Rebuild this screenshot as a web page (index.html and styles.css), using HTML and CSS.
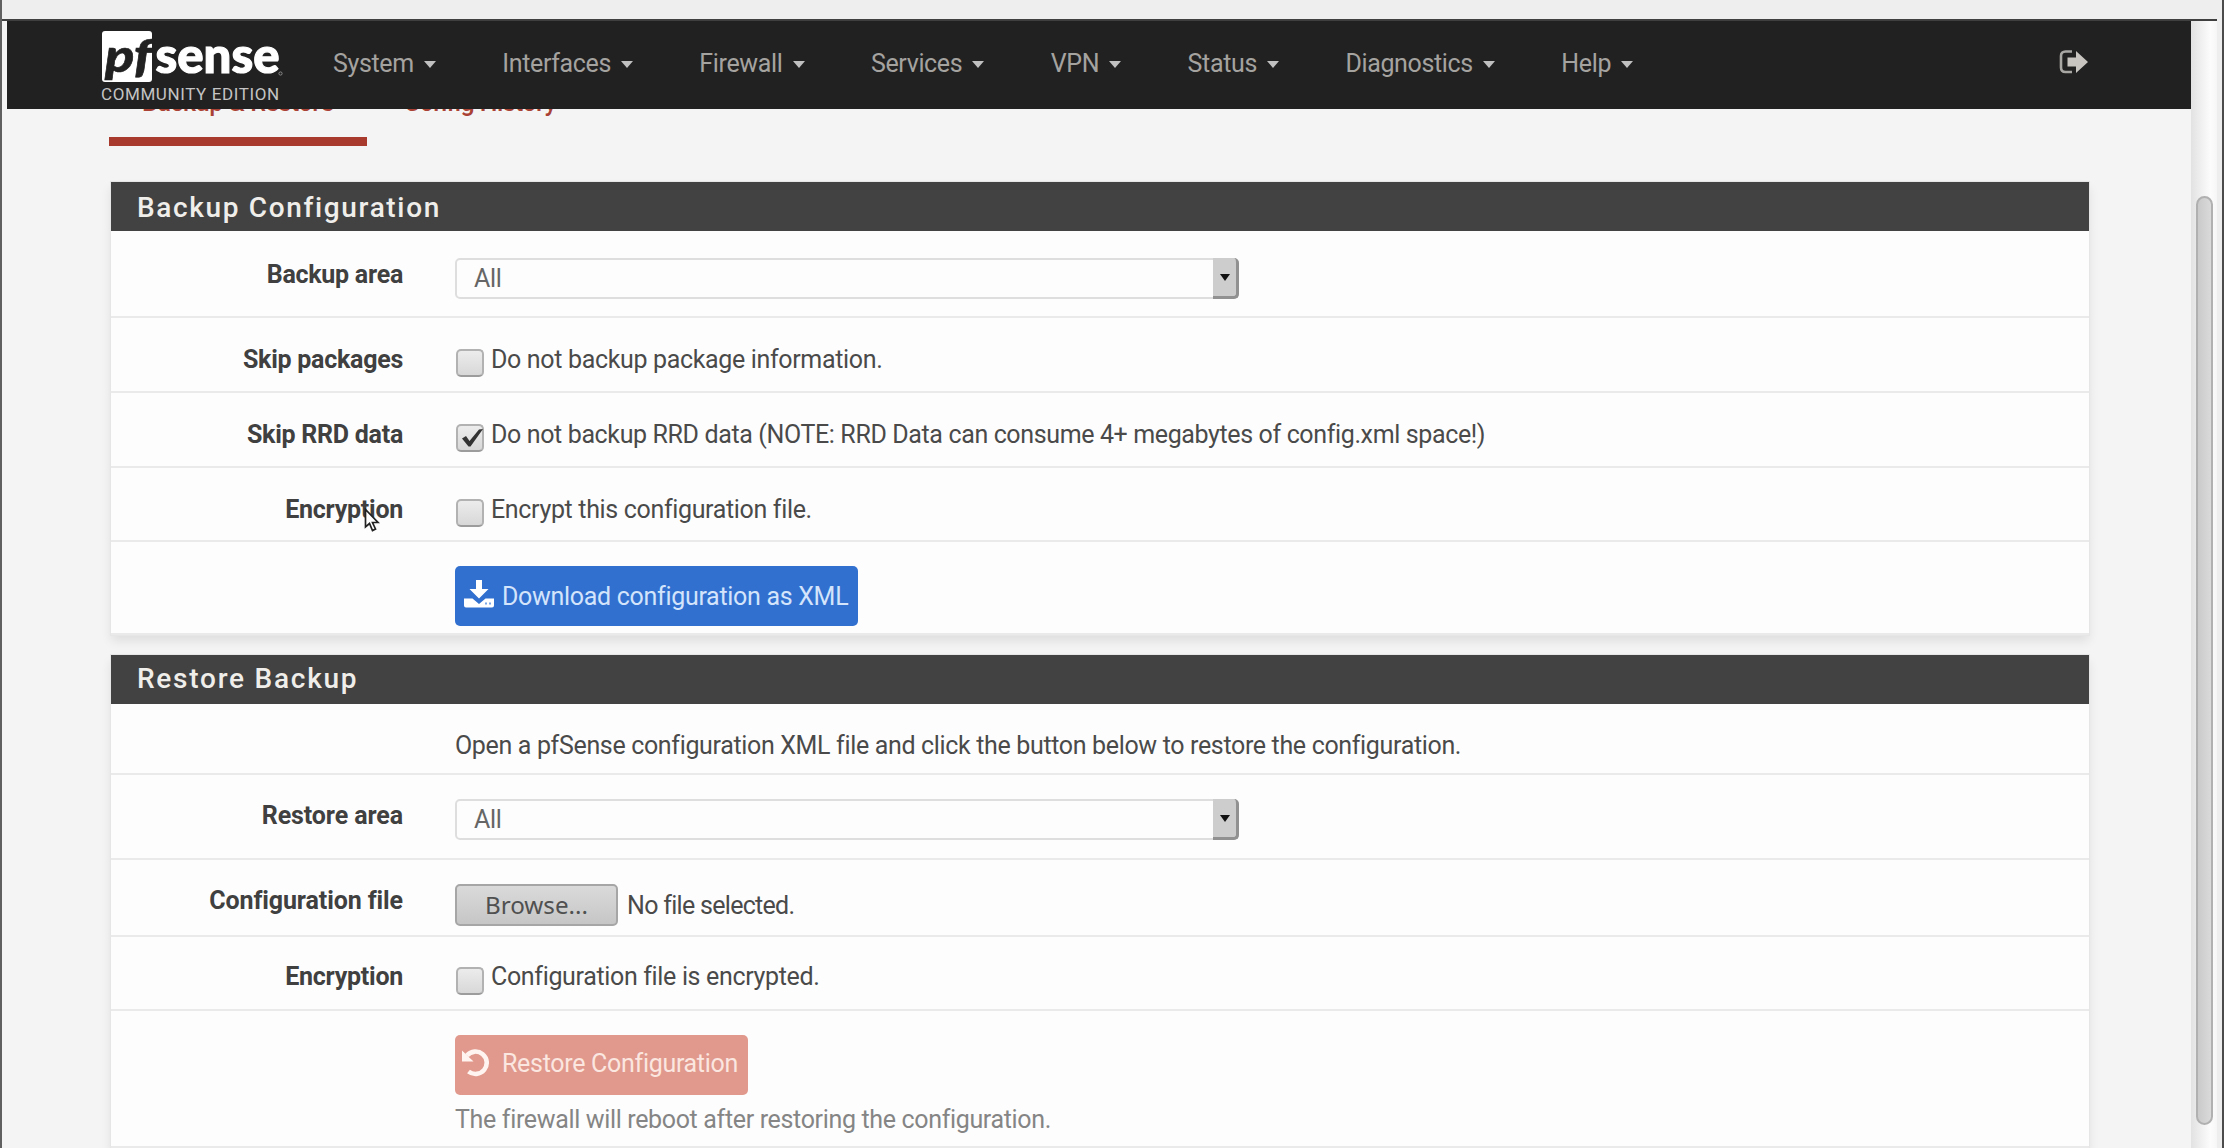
FILE: index.html
```html
<!DOCTYPE html>
<html lang="en">
<head>
<meta charset="utf-8">
<title>Diagnostics: Backup &amp; Restore</title>
<link rel="stylesheet" href="styles.css">
</head>
<body>
<div class="window">
  <div class="viewport">
    <div class="page">
      <nav class="navbar">
        <a class="brand">
          <svg class="logo" width="184" height="54" viewBox="0 0 184 54">
            <rect x="2" y="1" width="50" height="51" rx="3" fill="#fff"/>
            <text class="logo-pf" x="5" y="42" textLength="47" lengthAdjust="spacingAndGlyphs">pf</text>
            <text class="logo-sense" x="55.500" y="42.500" textLength="124" lengthAdjust="spacingAndGlyphs">sense</text>
            <circle cx="180.500" cy="43.500" r="1.600" fill="none" stroke="#8a8a8a"/>
          </svg>
          <span class="edition">COMMUNITY EDITION</span>
        </a>
        <ul class="menu">
          <li>System<i class="caret"></i></li>
          <li>Interfaces<i class="caret"></i></li>
          <li>Firewall<i class="caret"></i></li>
          <li>Services<i class="caret"></i></li>
          <li>VPN<i class="caret"></i></li>
          <li>Status<i class="caret"></i></li>
          <li>Diagnostics<i class="caret"></i></li>
          <li>Help<i class="caret"></i></li>
        </ul>
        <svg class="logout" width="30" height="24" viewBox="0 0 30 24">
          <path d="M13 1.500H6.500Q2 1.500 2 6V17.500Q2 22 6.500 22H13" fill="none" stroke="#a9a7a4" stroke-width="2.600"/>
          <path d="M8.500 7.500H17V1L29 12 17 23V16.500H8.500Z" fill="#c8c5c0"/>
        </svg>
      </nav>

      <div class="tabs">
        <a class="tab active">Backup &amp; Restore</a>
        <a class="tab">Config History</a>
      </div>

      <section class="panel backup">
        <h2>Backup Configuration</h2>
        <div class="row area">
          <label>Backup area</label>
          <div class="select"><span>All</span><b class="arrow"></b></div>
        </div>
        <div class="row">
          <label>Skip packages</label>
          <div class="check"><i class="box"></i>Do not backup package information.</div>
        </div>
        <div class="row">
          <label>Skip RRD data</label>
          <div class="check note"><i class="box"><svg width="28" height="28" viewBox="0 0 28 28"><path d="M6 14.500L10 12 13.500 17 23 5.500 27 5 14.500 22.500H12.500Z" fill="#333"/></svg></i>Do not backup RRD data (NOTE: RRD Data can consume 4+ megabytes of config.xml space!)</div>
        </div>
        <div class="row encrypt">
          <label>Encryption</label>
          <div class="check"><i class="box"></i>Encrypt this configuration file.</div>
        </div>
        <div class="row action">
          <label></label>
          <div><button class="btn primary">
            <svg width="30" height="28" viewBox="0 0 30 28"><path d="M12 0H18V9H24.500L15 18.500 5.500 9H12Z" fill="#fff"/><path d="M0 18.500H8.500L15 24 21.500 18.500H30V25.500Q30 27.500 28 27.500H2Q0 27.500 0 25.500Z" fill="#fff"/><path d="M21 23.500h2M25 23.500h2" stroke="#7aa5e6" stroke-width="2"/></svg>
            <span>Download configuration as XML</span></button></div>
        </div>
      </section>

      <section class="panel restore">
        <h2>Restore Backup</h2>
        <div class="row intro">
          <label></label>
          <div class="text">Open a pfSense configuration XML file and click the button below to restore the configuration.</div>
        </div>
        <div class="row area">
          <label>Restore area</label>
          <div class="select"><span>All</span><b class="arrow"></b></div>
        </div>
        <div class="row file">
          <label>Configuration file</label>
          <div class="upload"><button class="browse">Browse...</button><span>No file selected.</span></div>
        </div>
        <div class="row encrypt">
          <label>Encryption</label>
          <div class="check"><i class="box"></i>Configuration file is encrypted.</div>
        </div>
        <div class="row action">
          <label></label>
          <div><button class="btn danger">
            <svg width="30" height="29" viewBox="0 0 30 29"><path d="M5 6.500A11.200 11.200 0 1 1 6.500 22.500" fill="none" stroke="#fff4f0" stroke-width="4.600"/><path d="M0 1.500L0 12.500H11.500Z" fill="#fff4f0"/></svg>
            <span>Restore Configuration</span></button>
            <p class="help">The firewall will reboot after restoring the configuration.</p></div>
        </div>
      </section>
    </div>
    <div class="scrollbar"><div class="thumb"></div></div>
  </div>
  <svg class="cursor" width="16" height="25" viewBox="0 0 16 25"><path d="M1.500 1.500V19L5.500 15.500 8.500 22.500 11.500 21 8.500 14.500H14Z" fill="#fff" stroke="#222" stroke-width="1.700"/></svg>
</div>
</body>
</html>
```
FILE: styles.css
```css
* { box-sizing: border-box; }
body {
  margin: 0;
  background: #eeeeee;
  color: #4a4a4a;
  font: 25px/30px Roboto, "Liberation Sans", sans-serif;
  letter-spacing: -0.34px;
}
.window {
  position: relative;
  height: 1148px;
  padding-top: 19px;
  border-left: 2px solid #606060;
  border-right: 2px solid #4c4c4c;
  overflow: hidden;
}
.viewport {
  display: flex;
  width: 2215px;
  height: 1129px;
  border-top: 2px solid #3f3f3f;
}
.page {
  width: 2189px;
  padding-left: 5px;
  background: #f4f4f4;
  overflow: hidden;
}
.navbar {
  position: relative;
  z-index: 1;
  display: flex;
  align-items: flex-start;
  height: 88px;
  padding: 9px 102px 0 93px;
  background: #212121;
}
.brand { width: 233px; }
.logo { display: block; overflow: visible; }
.logo-pf { font: italic 900 45px Lato, sans-serif; fill: #212121; stroke: #212121; stroke-width: 0.6px; letter-spacing: 0; }
.logo-sense { font: 900 50px Lato, sans-serif; fill: #fff; stroke: #fff; stroke-width: 1.2px; letter-spacing: 0; }
.edition {
  display: block;
  padding-left: 1px;
  font-size: 17px;
  line-height: 20px;
  letter-spacing: 0.6px;
  color: #c4c4c4;
  white-space: nowrap;
}
.menu {
  display: flex;
  gap: 66.4px;
  margin: 19px auto 0 0;
  padding: 0;
  list-style: none;
  color: #a5a3a0;
}
.menu li { display: flex; align-items: center; letter-spacing: -0.35px; }
.caret {
  margin-left: 10px;
  border: 6.5px solid transparent;
  border-top: 7.5px solid #c0c0c0;
  border-bottom: 0;
}
.logout { margin-top: 20px; }
.tabs {
  display: flex;
  height: 73px;
  margin: -36px 0 0 102px;
  padding-top: 15px;
  font-weight: 500;
  color: #a94235;
  letter-spacing: -0.4px;
}
.tab { height: 58px; padding: 0 33px; }
.tab + .tab { padding-left: 37px; letter-spacing: -0.6px; }
.active { width: 258px; border-bottom: 9px solid #a83a2d; }
.panel {
  width: 1978px;
  margin-left: 104px;
  background: #fdfdfd;
  box-shadow: 0 0 0 1px #e6e6e6, 0 6px 10px rgba(0, 0, 0, 0.09);
}
.backup { margin-top: 36px; }
.restore { margin-top: 20px; }
h2 {
  height: 49px;
  margin: 0;
  padding: 10px 26px 0;
  background: #424242;
  color: #f0eeea;
  font-size: 28px;
  font-weight: 500;
  line-height: 32px;
  letter-spacing: 1.65px;
}
.restore h2 { padding-top: 8px; letter-spacing: 1.75px; }
.row {
  display: grid;
  grid-template-columns: 292px 1fr;
  column-gap: 52px;
  height: 75px;
  padding-top: 27px;
  border-bottom: 2px solid #eaeaea;
}
.row label { text-align: right; font-weight: 700; color: #404040; letter-spacing: -0.26px; }
.backup .area { height: 87px; }
.backup .area label { padding-top: 2px; }
.encrypt { height: 74px; }
.backup .action { height: 93px; padding-top: 24px; }
.intro { height: 71px; }
.restore .area { height: 85px; padding-top: 24px; }
.restore .area label, .file label { padding-top: 2px; letter-spacing: -0.1px; }
.file { height: 77px; padding-top: 24px; }
.restore .encrypt { padding-top: 25px; }
.restore .action { height: 137px; padding-top: 24px; }
.select {
  display: flex;
  width: 784px;
  height: 41px;
  border: 2px solid #dedede;
  border-radius: 5px;
  color: #666;
}
.select span { flex: 1; padding: 4px 17px; }
.arrow {
  display: grid;
  place-items: center;
  width: 26px;
  height: 41px;
  margin: -2px -2px 0 0;
  background: #cdcdcd;
  border: solid #919191;
  border-width: 0 3px 3px 0;
  border-radius: 0 5px 5px 0;
}
.arrow::after {
  content: "";
  border: 5px solid transparent;
  border-top: 7px solid #111;
  border-bottom: 0;
}
.check { display: flex; white-space: nowrap; }
.note { letter-spacing: -0.37px; }
.box {
  width: 28px;
  height: 28px;
  margin: 4px 7px 0 1px;
  border: 2px solid #b2b2b2;
  border-bottom-color: #9c9c9c;
  border-radius: 5px;
  background: linear-gradient(#ececec, #d8d8d8);
}
.restore .box { margin-top: 5px; }
.box svg { display: block; margin: -2px; }
.btn {
  display: flex;
  align-items: flex-start;
  height: 60px;
  padding: 14px 9px 0;
  border: 0;
  border-radius: 5px;
  font: inherit;
  letter-spacing: -0.3px;
  white-space: nowrap;
}
.btn svg { margin-right: 8px; }
.btn span { padding-top: 2px; }
.primary { width: 403px; background: #3270d0; color: #d3e4fb; }
.danger { width: 293px; background: #e0998c; color: #fbe6e0; padding-left: 7px; }
.danger svg { margin-right: 10px; }
.danger span { padding-top: 0; }
.upload { display: flex; letter-spacing: -0.7px; }
.upload span { padding: 7px 0 0 9px; }
.browse {
  width: 163px;
  height: 42px;
  padding: 0;
  border: 2px solid #a6a6a6;
  border-radius: 5px;
  background: linear-gradient(#dadada, #c6c6c6);
  color: #505050;
  font: 24.2px/34px "Noto Sans", "Open Sans", sans-serif;
}
.help { margin: 10px 0 0; color: #858585; }
.scrollbar {
  width: 26px;
  padding: 175px 0 0 5px;
  background: linear-gradient(90deg, #e2e2e2, #f0f0f0 40%, #fcfcfc 75%, #f6f6f6);
}
.thumb {
  width: 17px;
  height: 929px;
  border: 2px solid #b0b0b0;
  border-radius: 9px;
  background: linear-gradient(90deg, #cacaca, #dadada);
}
.cursor { position: absolute; left: 362px; top: 508px; }
```
